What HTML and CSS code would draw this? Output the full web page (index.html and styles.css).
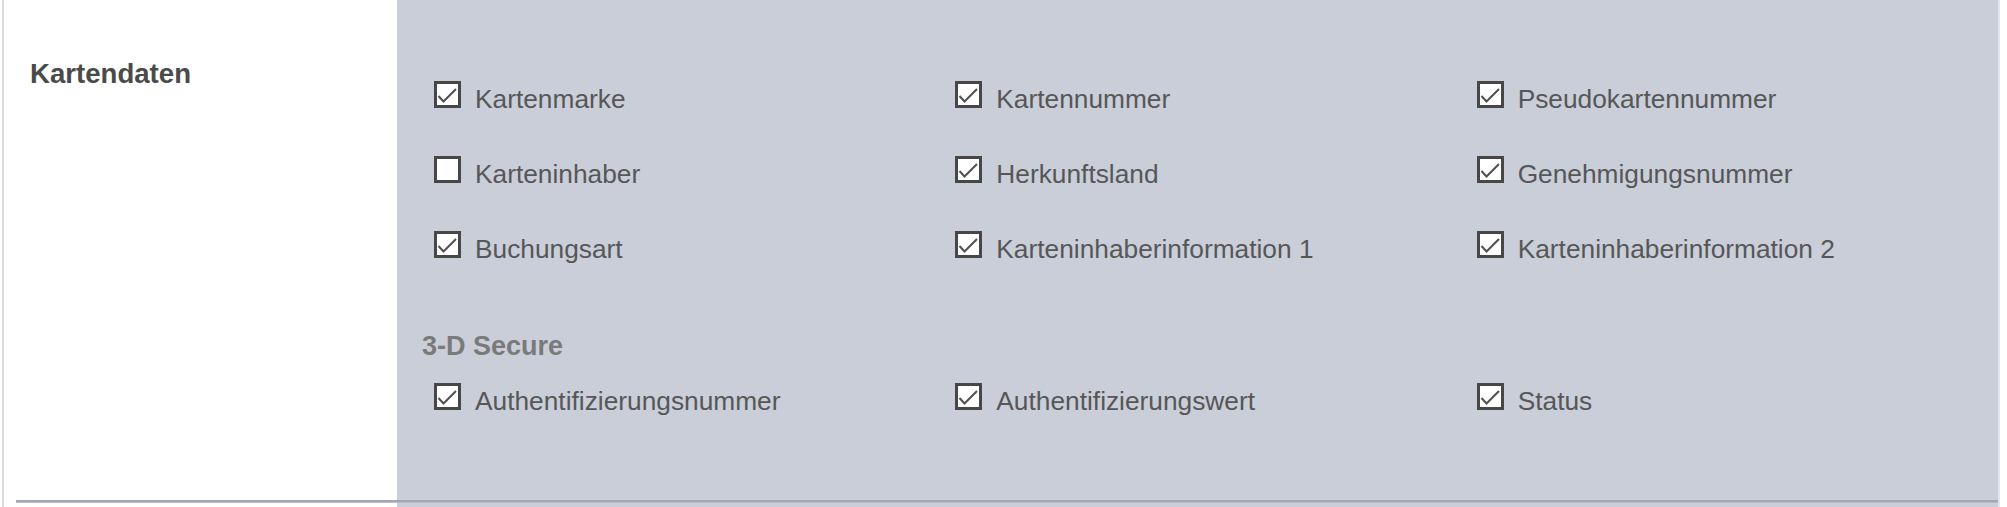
FILE: index.html
```html
<!DOCTYPE html>
<html lang="de">
<head>
    <meta charset="UTF-8">
    <meta name="viewport" content="width=device-width, initial-scale=1.0">
    <title>Kartendaten</title>
    <link rel="stylesheet" href="styles.css">
</head>
<body>
    <div class="form-table">
        <div class="label-cell">
            <h2 class="section-title">Kartendaten</h2>
        </div>

        <div class="fields-cell">
            <div class="field-grid">
                <label class="field"><svg class="box" viewBox="0 0 27 27"><rect x="1.5" y="1.5" width="24" height="24"/><polyline points="4.5,15 9.5,20.5 22,8"/></svg>Kartenmarke</label>
                <label class="field"><svg class="box" viewBox="0 0 27 27"><rect x="1.5" y="1.5" width="24" height="24"/><polyline points="4.5,15 9.5,20.5 22,8"/></svg>Kartennummer</label>
                <label class="field"><svg class="box" viewBox="0 0 27 27"><rect x="1.5" y="1.5" width="24" height="24"/><polyline points="4.5,15 9.5,20.5 22,8"/></svg>Pseudokartennummer</label>

                <label class="field"><svg class="box" viewBox="0 0 27 27"><rect x="1.5" y="1.5" width="24" height="24"/></svg>Karteninhaber</label>
                <label class="field"><svg class="box" viewBox="0 0 27 27"><rect x="1.5" y="1.5" width="24" height="24"/><polyline points="4.5,15 9.5,20.5 22,8"/></svg>Herkunftsland</label>
                <label class="field"><svg class="box" viewBox="0 0 27 27"><rect x="1.5" y="1.5" width="24" height="24"/><polyline points="4.5,15 9.5,20.5 22,8"/></svg>Genehmigungsnummer</label>

                <label class="field"><svg class="box" viewBox="0 0 27 27"><rect x="1.5" y="1.5" width="24" height="24"/><polyline points="4.5,15 9.5,20.5 22,8"/></svg>Buchungsart</label>
                <label class="field"><svg class="box" viewBox="0 0 27 27"><rect x="1.5" y="1.5" width="24" height="24"/><polyline points="4.5,15 9.5,20.5 22,8"/></svg>Karteninhaberinformation 1</label>
                <label class="field"><svg class="box" viewBox="0 0 27 27"><rect x="1.5" y="1.5" width="24" height="24"/><polyline points="4.5,15 9.5,20.5 22,8"/></svg>Karteninhaberinformation 2</label>
            </div>

            <h3 class="group-title">3-D Secure</h3>

            <div class="field-grid">
                <label class="field"><svg class="box" viewBox="0 0 27 27"><rect x="1.5" y="1.5" width="24" height="24"/><polyline points="4.5,15 9.5,20.5 22,8"/></svg>Authentifizierungsnummer</label>
                <label class="field"><svg class="box" viewBox="0 0 27 27"><rect x="1.5" y="1.5" width="24" height="24"/><polyline points="4.5,15 9.5,20.5 22,8"/></svg>Authentifizierungswert</label>
                <label class="field"><svg class="box" viewBox="0 0 27 27"><rect x="1.5" y="1.5" width="24" height="24"/><polyline points="4.5,15 9.5,20.5 22,8"/></svg>Status</label>
            </div>
        </div>
    </div>
</body>
</html>
```

FILE: styles.css
```css
body {
    margin: 0;
    font-family: "Liberation Sans", Arial, sans-serif;
    color: #575757;
    background-color: #fff;
    overflow: hidden;
}

.form-table {
    position: relative;
    display: flex;
    height: 507px;
    margin-left: 2px;
    border-left: 2px solid #dcdcdc;
}

/* row separator, drawn over both cells */
.form-table::after {
    content: "";
    position: absolute;
    left: 12px;
    right: 9px;
    top: 500px;
    height: 2px;
    background-color: #a1a8b6;
    border-bottom: 1px solid #b7bcc8;
}

.label-cell {
    width: 367px;
    padding: 58px 0 0 26px;
}

.section-title {
    margin: 0;
    font-size: 27.6px;
    line-height: 32px;
    font-weight: bold;
    color: #4a4a4a;
}

.fields-cell {
    flex: 1;
    margin-right: 7px;
    padding: 81px 0 0 25px;
    background-color: #c9ced9;
    border-right: 2px solid #e3e6ed;
}

.field-grid {
    display: grid;
    grid-template-columns: repeat(3, 1fr);
    row-gap: 42px;
    padding-left: 12px;
}

.field {
    display: block;
    font-size: 26.3px;
    line-height: 30px;
    white-space: nowrap;
}

.box {
    width: 27px;
    height: 27px;
    margin-right: 14px;
    vertical-align: baseline;
}

.box rect {
    fill: #fff;
    stroke: #474747;
    stroke-width: 3;
}

.box polyline {
    fill: none;
    stroke: #505050;
    stroke-width: 2;
}

.group-title {
    margin: 66px 0 21px;
    font-size: 27px;
    line-height: 32px;
    font-weight: bold;
    color: #7a7a7a;
}
```
